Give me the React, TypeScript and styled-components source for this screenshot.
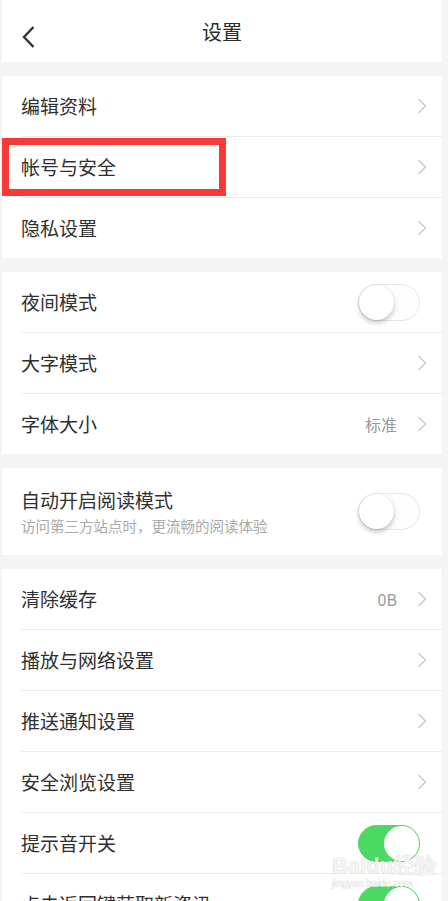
import styled, { createGlobalStyle } from "styled-components";

const GlobalStyle = createGlobalStyle`
  html, body {
    margin: 0;
    padding: 0;
    background: #f4f4f4;
    overflow: hidden;
  }
  body {
    font-family: "Noto Sans CJK SC", "Noto Sans", sans-serif;
  }
`;

const Page = styled.div`
  position: relative;
  width: 440px;
  margin-left: 2px;
  background: #f4f4f4;
  display: flex;
  flex-direction: column;
  gap: 14px;
`;

const Header = styled.header`
  height: 62px;
  background: #fff;
  display: flex;
  align-items: center;
  justify-content: center;
  position: relative;
`;

const BackButton = styled.button`
  position: absolute;
  left: 12px;
  top: 20px;
  width: 30px;
  height: 34px;
  border: 0;
  padding: 0;
  background: none;
  display: flex;
  align-items: center;
  justify-content: center;
`;

const Title = styled.h1`
  margin: 0;
  font-size: 20px;
  font-weight: 400;
  color: #2b2b2b;
`;

const Section = styled.section`
  background: #fff;
`;

const Row = styled.div<{ $tall?: boolean }>`
  margin-left: 19px;
  padding-right: 15px;
  height: ${(p) => (p.$tall ? "87px" : "60px")};
  display: flex;
  align-items: center;

  & + & {
    border-top: 1px solid #ececec;
  }
`;

const Texts = styled.div`
  flex: 1;
  display: flex;
  flex-direction: column;
  gap: 6px;
`;

const Label = styled.span`
  font-size: 19px;
  color: #303030;
  line-height: 22px;
`;

const Sub = styled.span`
  font-size: 14.5px;
  color: #aaa;
  line-height: 18px;
`;

const Value = styled.span`
  font-size: 16px;
  color: #999;
  margin-right: 20px;
`;

const Track = styled.div<{ $on?: boolean }>`
  position: relative;
  width: 62px;
  height: 37px;
  border-radius: 19px;
  box-sizing: border-box;
  margin-right: 7px;
  background: ${(p) => (p.$on ? "#4cd964" : "#fdfdfd")};
  border: 1px solid ${(p) => (p.$on ? "#4cd964" : "#e6e6e6")};
`;

const Knob = styled.div<{ $on?: boolean }>`
  position: absolute;
  top: 0;
  left: ${(p) => (p.$on ? "25px" : "0")};
  width: 35px;
  height: 35px;
  border-radius: 50%;
  background: #fff;
  box-shadow: ${(p) =>
    p.$on ? "none" : "0 3px 5px rgba(0,0,0,0.22), 0 0 1px rgba(0,0,0,0.15)"};
`;

const Highlight = styled.div`
  position: absolute;
  left: 0;
  top: 138px;
  width: 224px;
  height: 58px;
  box-sizing: border-box;
  border: 7px solid #fb3838;
  pointer-events: none;
`;

const Watermark = styled.div`
  position: absolute;
  left: 330px;
  top: 855px;
  color: rgba(255, 255, 255, 0.85);
  text-shadow: 0 0 1px rgba(120, 120, 120, 0.5);
  font-family: "Liberation Sans", sans-serif;
  font-size: 22px;
  font-weight: 700;
  pointer-events: none;
  line-height: 22px;
  small {
    display: block;
    font-size: 10px;
    font-weight: 400;
    line-height: 14px;
  }
`;

function Chevron() {
  return (
    <svg width="10" height="16" viewBox="0 0 10 16">
      <polyline points="1.5,1 8.5,8 1.5,15" fill="none" stroke="#c9c9c9" strokeWidth="1.4" />
    </svg>
  );
}

function Toggle({ on }: { on?: boolean }) {
  return (
    <Track $on={on}>
      <Knob $on={on} />
    </Track>
  );
}

type Item = { label: string; sub?: string; value?: string; toggle?: "on" | "off" };

const sections: Item[][] = [
  [{ label: "编辑资料" }, { label: "帐号与安全" }, { label: "隐私设置" }],
  [{ label: "夜间模式", toggle: "off" }, { label: "大字模式" }, { label: "字体大小", value: "标准" }],
  [{ label: "自动开启阅读模式", sub: "访问第三方站点时，更流畅的阅读体验", toggle: "off" }],
  [
    { label: "清除缓存", value: "0B" },
    { label: "播放与网络设置" },
    { label: "推送通知设置" },
    { label: "安全浏览设置" },
    { label: "提示音开关", toggle: "on" },
    { label: "点击返回键获取新资讯", toggle: "on" },
  ],
];

export default function App() {
  return (
    <>
      <GlobalStyle />
      <Page>
        <Header>
          <BackButton>
            <svg width="14" height="24" viewBox="0 0 14 24">
              <polyline points="11.5,2 2,12 11.5,22" fill="none" stroke="#333" strokeWidth="2.4" />
            </svg>
          </BackButton>
          <Title>设置</Title>
        </Header>
        {sections.map((items, i) => (
          <Section key={i}>
            {items.map((it) => (
              <Row key={it.label} $tall={!!it.sub}>
                <Texts>
                  <Label>{it.label}</Label>
                  {it.sub && <Sub>{it.sub}</Sub>}
                </Texts>
                {it.value && <Value>{it.value}</Value>}
                {it.toggle ? <Toggle on={it.toggle === "on"} /> : <Chevron />}
              </Row>
            ))}
          </Section>
        ))}
        <Highlight />
        <Watermark>
          Bai<span>du</span>经验
          <small>jingyan.baidu.com</small>
        </Watermark>
      </Page>
    </>
  );
}
